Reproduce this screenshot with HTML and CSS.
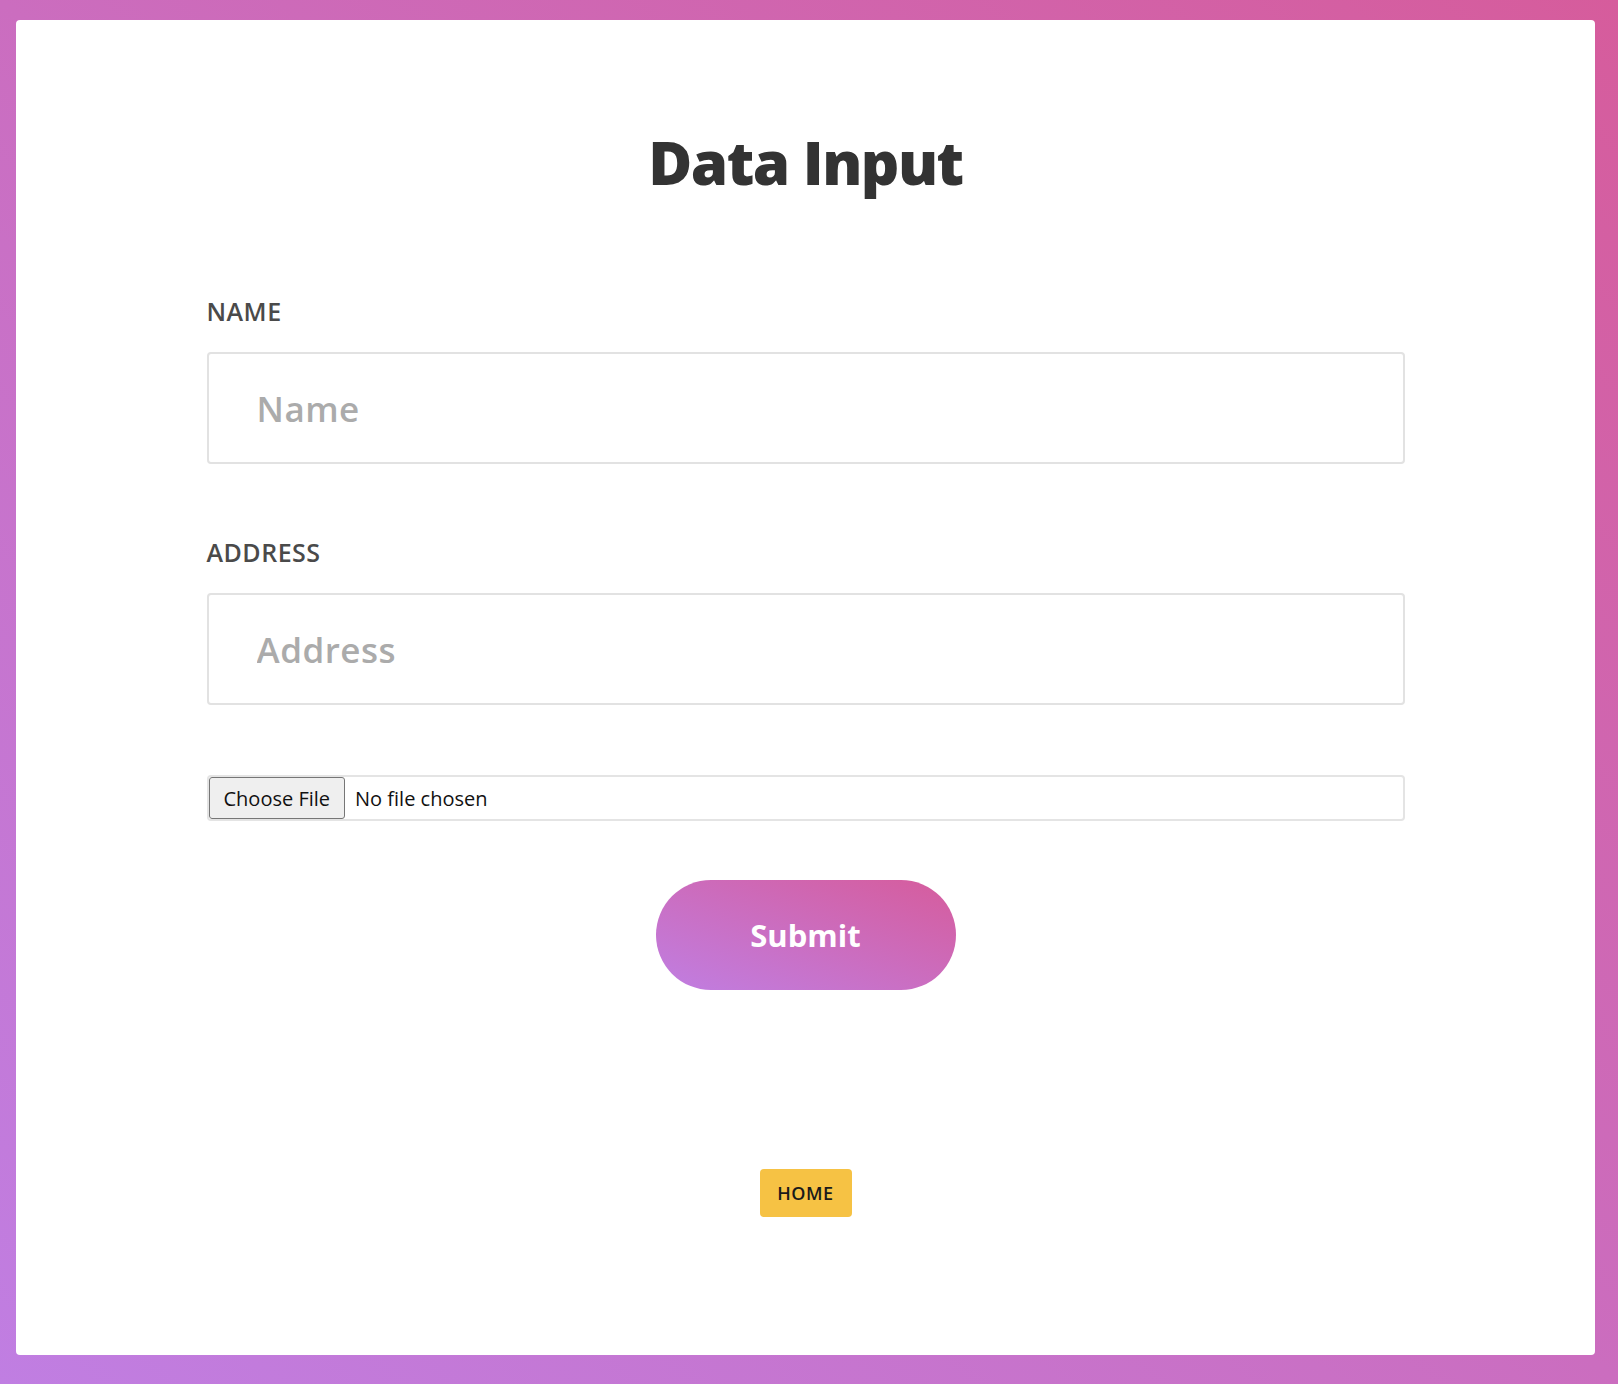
FILE: index.html
```html
<!DOCTYPE html>
<html lang="en">
<head>
<meta charset="utf-8">
<title>Data Input</title>
<link rel="stylesheet" href="styles.css">
</head>
<body>
<main class="card">
  <h1 class="title">Data Input</h1>
  <form class="form">
    <label class="label" for="name">NAME</label>
    <input class="field" id="name" type="text" placeholder="Name">
    <label class="label label-address" for="address">ADDRESS</label>
    <input class="field" id="address" type="text" placeholder="Address">
    <input class="file" type="file">
    <button class="submit" type="button">Submit</button>
  </form>
  <a class="home" href="#">HOME</a>
</main>
</body>
</html>
```

FILE: styles.css
```css
html, body {
  margin: 0;
  height: 100%;
}
body {
  box-sizing: border-box;
  padding: 20px 23px 29px 16px;
  background: linear-gradient(to top right, #c07ee2, #d65c9c);
  font-family: "Open Sans", "Lato", sans-serif;
}
.card {
  box-sizing: border-box;
  height: 100%;
  background: #fff;
  border-radius: 4px;
  display: flex;
  flex-direction: column;
  align-items: center;
  padding-top: 111px;
}
.title {
  margin: 0;
  font-size: 60px;
  line-height: 62px;
  font-weight: 800;
  color: #333;
  letter-spacing: -1.5px;
}
.form {
  width: 1198px;
  display: flex;
  flex-direction: column;
  margin-top: 105px;
}
.label {
  font-size: 25px;
  line-height: 26px;
  font-weight: 600;
  color: #4a4a4a;
  letter-spacing: 0.5px;
  margin-bottom: 28px;
}
.label-address {
  margin-top: 75px;
}
.field {
  box-sizing: border-box;
  height: 112px;
  border: 2px solid #e2e2e2;
  border-radius: 4px;
  padding: 0 48px;
  font-family: inherit;
  font-size: 35px;
  letter-spacing: 0.5px;
  color: #333;
  outline: none;
}
.field::placeholder {
  color: #ababab;
  font-weight: 600;
}
.file {
  box-sizing: border-box;
  margin-top: 70px;
  height: 46px;
  border: 2px solid #e4e4e4;
  border-radius: 4px;
  font-family: inherit;
  font-size: 20px;
  font-weight: 500;
  color: #111;
  padding: 0;
}
.file::file-selector-button {
  height: 42px;
  margin: 0 10px 0 0;
  padding: 0 14px;
  font-family: inherit;
  font-size: 20px;
  font-weight: 500;
  color: #111;
  background: #efefef;
  border: 1px solid #767676;
  border-radius: 3px;
}
.submit {
  align-self: center;
  margin-top: 59px;
  width: 300px;
  height: 110px;
  border: none;
  border-radius: 55px;
  background: linear-gradient(to top right, #c07ee2, #d65c9c);
  color: #fff;
  font-family: inherit;
  font-size: 31px;
  font-weight: 700;
}
.home {
  margin-top: 179px;
  display: flex;
  align-items: center;
  justify-content: center;
  width: 92px;
  height: 48px;
  box-sizing: border-box;
  background: #f6c244;
  border-radius: 4px;
  color: #1a1a1a;
  text-decoration: none;
  font-size: 18px;
  letter-spacing: 0.5px;
  font-weight: 600;
}
```
